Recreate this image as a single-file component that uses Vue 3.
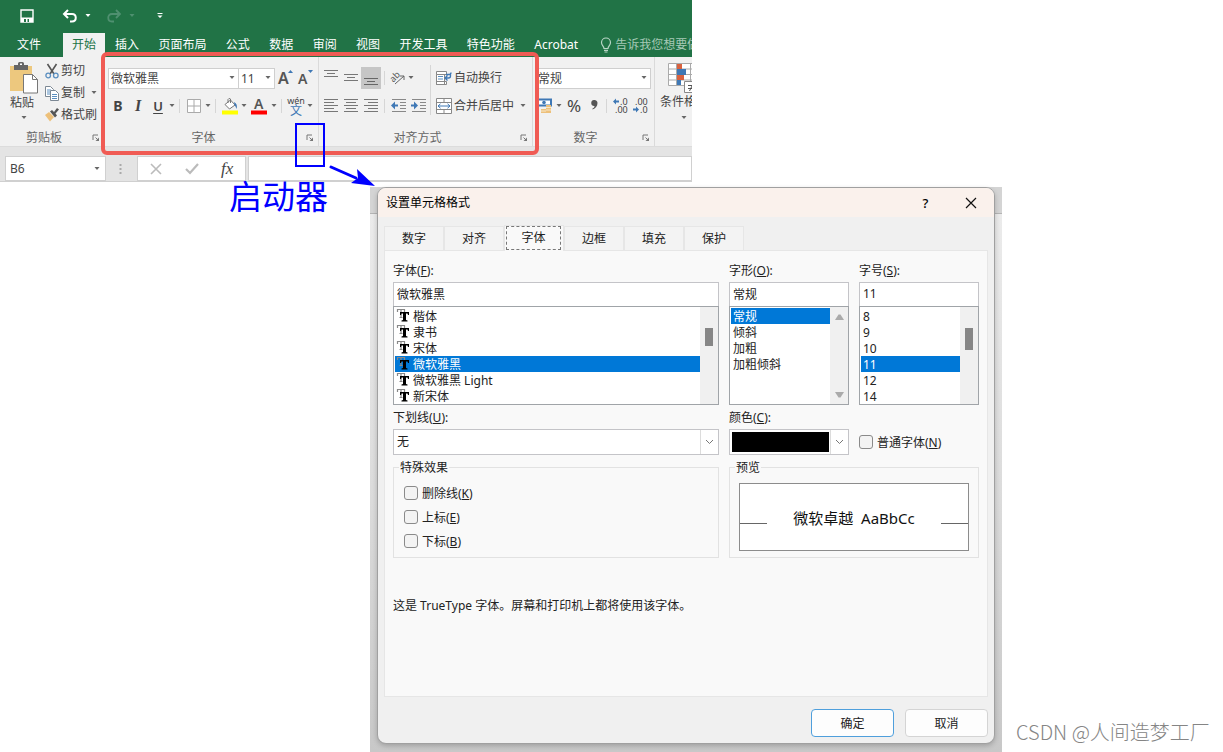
<script setup>
import { ref } from 'vue'

const ribbonTabs = ['插入', '页面布局', '公式', '数据', '审阅', '视图', '开发工具', '特色功能', 'Acrobat']
const dialogTabs = ['数字', '对齐', '字体', '边框', '填充', '保护']
const fonts = ['楷体', '隶书', '宋体', '微软雅黑', '微软雅黑 Light', '新宋体']
const styles = ['常规', '倾斜', '加粗', '加粗倾斜']
const sizes = ['8', '9', '10', '11', '12', '14']
const effects = [
  { text: '删除线', key: 'K' },
  { text: '上标', key: 'E' },
  { text: '下标', key: 'B' },
]

const activeTab = ref('字体')
const font = ref('微软雅黑')
const fontStyle = ref('常规')
const size = ref('11')
</script>

<template>
  <main class="page">
    <section class="excel">
      <header class="quick">
        <button class="q save" aria-label="保存">
          <svg width="14" height="14" viewBox="0 0 14 14"><path d="M1 1h12v12H1z" fill="none" stroke="#fff" stroke-width="1.4" /><path d="M1 8.5h12V13H1z" fill="#fff" /><path d="M4 10h2v3H4zM7.500 10h1.500v3H7.500z" fill="#217346" /></svg>
        </button>
        <button class="q undo" aria-label="撤消">
          <svg width="16" height="14" viewBox="0 0 16 14"><path d="M6 1L2 5l4 4M2.500 5H10c5 0 5 7.500 0 7.500H8" fill="none" stroke="#fff" stroke-width="2" /></svg>
        </button>
        <svg class="caret light" width="8" height="4" viewBox="0 0 8 4"><path d="M1.500 0h5L4 3z" /></svg>
        <button class="q redo" aria-label="恢复" disabled>
          <svg width="16" height="14" viewBox="0 0 16 14"><path d="M10 1l4 4-4 4M13.500 5H6c-5 0-5 7.500 0 7.500h2" fill="none" stroke="#4f9070" stroke-width="1.8" /></svg>
        </button>
        <svg class="caret dim" width="8" height="4" viewBox="0 0 8 4"><path d="M1.500 0h5L4 3z" /></svg>
        <button class="q custom" aria-label="自定义快速访问工具栏">
          <svg width="8" height="8" viewBox="0 0 8 8"><path d="M1.500 1h5v1h-5zM1.500 3.500h5L4 6z" fill="#fff" /></svg>
        </button>
      </header>

      <nav class="tabs">
        <a class="file" href="#file">文件</a>
        <a class="home" href="#home">开始</a>
        <div class="rest">
          <a v-for="t in ribbonTabs" :key="t" href="#tab">{{ t }}</a>
        </div>
        <button class="tell">
          <svg width="12" height="16" viewBox="0 0 12 16"><path d="M4 11.500C4 9 1.500 8.500 1.500 5.500a4.500 4.500 0 0 1 9 0C10.500 8.500 8 9 8 11.500zM4 13.300h4M4.500 15h3" fill="none" stroke="#b9d5c6" stroke-width="1.200" /></svg>
          <span>告诉我您想要做什么</span>
        </button>
      </nav>

      <div class="ribbon">
        <section class="group clip">
          <div class="tools">
            <button class="paste">
              <svg width="30" height="32" viewBox="0 0 30 32"><path d="M1 4h22v25H1z" fill="#edc87e" /><path d="M5 3h4V1.500Q9 0 10.500 0h3Q15 0 15 1.500V3h4v5H5z" fill="#666" /><path d="M11 1.500h2V3h-2z" fill="#fff" /><path d="M14.500 12.500h9l5 5V31h-14z" fill="#fff" stroke="#777" /><path d="M23.500 12.500v5h5" fill="none" stroke="#777" /></svg>
              <span>粘贴</span>
              <svg class="caret" width="8" height="4" viewBox="0 0 8 4"><path d="M1.500 0h5L4 3z" /></svg>
            </button>
            <div class="cliplist">
              <button>
                <svg width="14" height="15" viewBox="0 0 14 15"><path d="M2.500 0L9 10M11.500 0L5 10" stroke="#555" stroke-width="1.600" /><circle cx="3.200" cy="11.500" r="2.300" fill="none" stroke="#5b8fc0" stroke-width="1.300" /><circle cx="10.800" cy="11.500" r="2.300" fill="none" stroke="#5b8fc0" stroke-width="1.300" /></svg>
                <span>剪切</span>
              </button>
              <button>
                <svg width="14" height="15" viewBox="0 0 14 15"><path d="M.5.5h5l3 3v7h-8z" fill="#fff" stroke="#7c8894" /><path d="M2 4h4M2 6h4M2 8h4" stroke="#5b8fc0" /><path d="M5.500 4.500h5l3 3v7h-8z" fill="#fff" stroke="#7c8894" /><path d="M7 8.500h5M7 10.500h5M7 12.500h5" stroke="#5b8fc0" /></svg>
                <span>复制</span>
                <svg class="caret" width="8" height="4" viewBox="0 0 8 4"><path d="M1.500 0h5L4 3z" /></svg>
              </button>
              <button>
                <svg width="14" height="14" viewBox="0 0 14 14"><path d="M0 7l4-3 5 5-4 4.500z" fill="#edc07a" /><path d="M5 3.500l2-1.500 2 2 3-4 2 1.500-3.500 4 1.500 2L10 9.500z" fill="#555" /></svg>
                <span>格式刷</span>
              </button>
            </div>
          </div>
          <footer><span>剪贴板</span><button class="launch" aria-label="剪贴板设置"><svg width="8" height="8" viewBox="0 0 8 8"><path d="M1 6V1h5M3.500 3.500L6.500 6.500" fill="none" stroke="#777" /><path d="M7 3.500V7H3.500z" fill="#777" /></svg></button></footer>
        </section>

        <section class="group fontg">
          <div class="stack">
            <div class="row r1">
              <div class="combo wide"><select aria-label="字体名称"><option>微软雅黑</option></select><svg class="caret" width="8" height="4" viewBox="0 0 8 4"><path d="M1.500 0h5L4 3z" /></svg></div>
              <div class="combo small"><select aria-label="字体大小"><option>11</option></select><svg class="caret" width="8" height="4" viewBox="0 0 8 4"><path d="M1.500 0h5L4 3z" /></svg></div>
              <button class="b" aria-label="增大字号"><svg width="16" height="18" viewBox="0 0 16 18"><text x="1" y="15" class="glyph big">A</text><path d="M11 4l2.500-3L16 4z" fill="#3f78b5" /></svg></button>
              <button class="b" aria-label="减小字号"><svg width="16" height="18" viewBox="0 0 16 18"><text x="1" y="15" class="glyph">A</text><path d="M11 1h5l-2.500 3z" fill="#3f78b5" /></svg></button>
            </div>
            <div class="row r2">
              <button class="b bold">B</button>
              <button class="b ital">I</button>
              <button class="b under">U</button>
              <svg class="caret" width="8" height="4" viewBox="0 0 8 4"><path d="M1.500 0h5L4 3z" /></svg>
              <i class="sep"></i>
              <button class="b" aria-label="边框"><svg width="14" height="14" viewBox="0 0 14 14"><path d="M.5.5h13v13H.5zM7 .5v13M.5 7h13" fill="#fff" stroke="#aaa" /></svg></button>
              <svg class="caret" width="8" height="4" viewBox="0 0 8 4"><path d="M1.500 0h5L4 3z" /></svg>
              <i class="sep"></i>
              <button class="b" aria-label="填充颜色"><svg width="17" height="18" viewBox="0 0 17 18"><path d="M3 7.500L8.500 3l4.500 5-5.500 4z" fill="#fff" stroke="#777" /><path d="M6 6V2.500Q7 .5 8.500 2v4" fill="none" stroke="#777" /><path d="M12 5q4 2 2.500 7-1-3-2-4z" fill="#3f78b5" /><path d="M0 13.500h16v4H0z" fill="#ff0" /></svg></button>
              <svg class="caret" width="8" height="4" viewBox="0 0 8 4"><path d="M1.500 0h5L4 3z" /></svg>
              <button class="b b22" aria-label="字体颜色"><svg width="17" height="18" viewBox="0 0 17 18"><text x="3" y="12" class="glyph">A</text><path d="M0 13.500h16v4H0z" fill="#f00" /></svg></button>
              <svg class="caret" width="8" height="4" viewBox="0 0 8 4"><path d="M1.500 0h5L4 3z" /></svg>
              <i class="sep"></i>
              <button class="b pinyin"><span>wén</span><span class="wen">文</span></button>
              <svg class="caret" width="8" height="4" viewBox="0 0 8 4"><path d="M1.500 0h5L4 3z" /></svg>
            </div>
          </div>
          <footer><span>字体</span><button class="launch" aria-label="字体设置"><svg width="8" height="8" viewBox="0 0 8 8"><path d="M1 6V1h5M3.500 3.500L6.500 6.500" fill="none" stroke="#777" /><path d="M7 3.500V7H3.500z" fill="#777" /></svg></button></footer>
        </section>

        <section class="group alig">
          <div class="tools">
            <div class="stack">
              <div class="row r1">
                <button class="b" aria-label="顶端对齐"><svg width="14" height="18" viewBox="0 0 14 18"><path d="M0 1.500h14M3 4.500h8M0 7.500h14" stroke="#777" /></svg></button>
                <button class="b" aria-label="垂直居中"><svg width="14" height="18" viewBox="0 0 14 18"><path d="M0 5.500h14M3 8.500h8M0 11.500h14" stroke="#777" /></svg></button>
                <button class="b pressed" aria-label="底端对齐"><svg width="14" height="18" viewBox="0 0 14 18"><path d="M0 9.500h14M3 12.500h8M0 15.500h14" stroke="#666" /></svg></button>
                <i class="sep"></i>
                <button class="b b18" aria-label="方向"><svg width="14" height="14" viewBox="0 0 14 14"><text x="-1" y="8" class="ab" transform="rotate(-45 5 6)">ab</text><path d="M4 13L13 5M13 9V5H9" fill="none" stroke="#666" /></svg></button>
                <svg class="caret" width="8" height="4" viewBox="0 0 8 4"><path d="M1.500 0h5L4 3z" /></svg>
              </div>
              <div class="row r2">
                <button class="b" aria-label="左对齐"><svg width="14" height="16" viewBox="0 0 14 16"><path d="M0 1.500h14M0 4.500h10M0 7.500h14M0 10.500h10M0 13.500h14" stroke="#777" /></svg></button>
                <button class="b" aria-label="居中"><svg width="14" height="16" viewBox="0 0 14 16"><path d="M0 1.500h14M2 4.500h10M0 7.500h14M2 10.500h10M0 13.500h14" stroke="#777" /></svg></button>
                <button class="b" aria-label="右对齐"><svg width="14" height="16" viewBox="0 0 14 16"><path d="M0 1.500h14M4 4.500h10M0 7.500h14M4 10.500h10M0 13.500h14" stroke="#777" /></svg></button>
                <i class="sep"></i>
                <button class="b" aria-label="减少缩进量"><svg width="16" height="16" viewBox="0 0 16 16"><path d="M1 1.500h14M9 4.500h6M9 7.500h6M9 10.500h6M1 13.500h14" stroke="#888" /><path d="M0 7.500L4 3.500v3h3v2H4v3z" fill="#3f78b5" /></svg></button>
                <button class="b" aria-label="增加缩进量"><svg width="16" height="16" viewBox="0 0 16 16"><path d="M1 1.500h14M9 4.500h6M9 7.500h6M9 10.500h6M1 13.500h14" stroke="#888" /><path d="M7 7.500l-4-4v3H0v2h3v3z" fill="#3f78b5" /></svg></button>
              </div>
            </div>
            <i class="sep tall"></i>
            <div class="stack">
              <div class="row r1">
                <button class="txt"><svg width="16" height="16" viewBox="0 0 16 16"><path d="M.5 1.500h10v3H.5zM.5 4.500h8v10h-8zM.5 11.500h10v3H.5z" fill="#fff" stroke="#888" /><path d="M2 6.500h5M2 9h5" stroke="#5b8fc0" /><path d="M10 4.500h3q2 0 2-2M14.500 3v3q0 2-2 2H9M11.500 5.500L9 8l2.500 2.500" fill="none" stroke="#3f78b5" stroke-width="1.300" /></svg><span>自动换行</span></button>
              </div>
              <div class="row r2">
                <button class="txt"><svg width="16" height="16" viewBox="0 0 16 16"><path d="M.5.5h15v15H.5zM.5 4.500h15M.5 11.500h15M8 .5v4M8 11.500v4" fill="#fff" stroke="#888" /><path d="M2 8h12M4.500 5.800L2 8l2.500 2.200M11.500 5.800L14 8l-2.500 2.200" fill="none" stroke="#3f78b5" /></svg><span>合并后居中</span></button>
                <svg class="caret gap" width="8" height="4" viewBox="0 0 8 4"><path d="M1.500 0h5L4 3z" /></svg>
              </div>
            </div>
          </div>
          <footer><span>对齐方式</span><button class="launch" aria-label="对齐设置"><svg width="8" height="8" viewBox="0 0 8 8"><path d="M1 6V1h5M3.500 3.500L6.500 6.500" fill="none" stroke="#777" /><path d="M7 3.500V7H3.500z" fill="#777" /></svg></button></footer>
        </section>

        <section class="group numb">
          <div class="stack">
            <div class="row r1">
              <div class="combo fmt"><select aria-label="数字格式"><option>常规</option></select><svg class="caret" width="8" height="4" viewBox="0 0 8 4"><path d="M1.500 0h5L4 3z" /></svg></div>
            </div>
            <div class="row r2">
              <button class="b" aria-label="会计数字格式"><svg width="16" height="16" viewBox="0 0 16 16"><path d="M1 1.500h13v6H1z" fill="#fff" stroke="#3f78b5" stroke-width="2" /><circle cx="7" cy="4.500" r="1.800" fill="#3f78b5" /><path d="M9 7h5v8H9zM4 11h5v4H4z" fill="#edc07a" /><path d="M9 9.500h5M9 12h5M4 13h5" stroke="#f7e8cc" /></svg></button>
              <svg class="caret" width="8" height="4" viewBox="0 0 8 4"><path d="M1.500 0h5L4 3z" /></svg>
              <button class="b b22 pct">%</button>
              <button class="b b18" aria-label="千位分隔样式"><svg width="10" height="14" viewBox="0 0 10 14"><path d="M5 1a3 3 0 0 1 3.500 3c0 3-2 5.500-5 6.500V9.500C5 9 5.500 8 5.500 7A3 3 0 0 1 5 1z" fill="#555" /></svg></button>
              <i class="sep"></i>
              <button class="b" aria-label="增加小数位数"><svg width="18" height="18" viewBox="0 0 18 18"><path d="M1 4.500L4 1.500v2h3v2H4v2z" fill="#3f78b5" /><text x="8" y="8" class="dec">.0</text><text x="3" y="16" class="dec">.00</text></svg></button>
              <button class="b" aria-label="减少小数位数"><svg width="18" height="18" viewBox="0 0 18 18"><path d="M7 12.500l-3-3v2H1v2h3v2z" fill="#3f78b5" /><text x="3" y="8" class="dec">.00</text><text x="8" y="16" class="dec">.0</text></svg></button>
            </div>
          </div>
          <footer><span>数字</span><button class="launch" aria-label="数字设置"><svg width="8" height="8" viewBox="0 0 8 8"><path d="M1 6V1h5M3.500 3.500L6.500 6.500" fill="none" stroke="#777" /><path d="M7 3.500V7H3.500z" fill="#777" /></svg></button></footer>
        </section>

        <section class="group cond">
          <button class="condbtn">
            <svg width="32" height="30" viewBox="0 0 32 30"><path d="M.5.5h30v22H.5zM.5 6h30M.5 11.500h30M.5 17h30M8.500.5v22M22.500.5v22" fill="#fff" stroke="#aaa" /><path d="M9 1h5v5H9zM9 12h7v5H9z" fill="#d9623f" /><path d="M9 6h9v6H9zM9 17h4v5H9z" fill="#3f78b5" /><path d="M16.500 18.500h14v11h-14z" fill="#fff" stroke="#888" /><path d="M20 22.500h7M20 25.500h7M25.500 20l-4 8" stroke="#555" /></svg>
            <span>条件格式</span>
            <svg class="caret" width="8" height="4" viewBox="0 0 8 4"><path d="M1.500 0h5L4 3z" /></svg>
          </button>
        </section>
      </div>

      <div class="formula">
        <div class="namebox"><input aria-label="名称框" value="B6" /><svg class="caret" width="8" height="4" viewBox="0 0 8 4"><path d="M1.500 0h5L4 3z" /></svg></div>
        <svg class="dots" width="3" height="12" viewBox="0 0 3 12"><path d="M.5 1h2v2h-2zM.5 5h2v2h-2zM.5 9h2v2h-2z" fill="#aaa" /></svg>
        <div class="fxbox">
          <button aria-label="取消输入"><svg width="12" height="12" viewBox="0 0 12 12"><path d="M1 1l10 10M11 1L1 11" stroke="#bbb" stroke-width="1.600" /></svg></button>
          <button aria-label="输入"><svg width="14" height="12" viewBox="0 0 14 12"><path d="M1 6l4 4 8-9" fill="none" stroke="#bbb" stroke-width="2.200" /></svg></button>
          <button class="fx">fx</button>
        </div>
        <input class="cell" aria-label="编辑栏" />
      </div>

      <div class="redbox"></div>
      <div class="bluebox"></div>
      <svg class="arrow" width="48" height="28" viewBox="0 0 48 28"><path d="M2 4L27 15" stroke="#00f" stroke-width="3" stroke-linecap="round" /><path d="M46 23L22 20l7-5-1-9z" fill="#00f" /></svg>
    </section>

    <div class="lower">
      <p class="callout">启动器</p>

      <div class="backdrop">
        <section class="dialog" role="dialog" aria-label="设置单元格格式">
          <header class="title">
            <h1>设置单元格格式</h1>
            <button class="help">?</button>
            <button aria-label="关闭"><svg width="12" height="12" viewBox="0 0 12 12"><path d="M1 1l10 10M11 1L1 11" stroke="#111" stroke-width="1.200" /></svg></button>
          </header>

          <div class="dbody">
            <div class="dtabs" role="tablist">
              <button v-for="t in dialogTabs" :key="t" role="tab" :aria-selected="t === activeTab" :class="{ on: t === activeTab }" @click="activeTab = t"><span>{{ t }}</span></button>
            </div>

            <div class="panel">
              <div class="cols">
                <div class="field">
                  <label for="font">字体(<u>F</u>):</label>
                  <input id="font" v-model="font" />
                  <div class="listwrap">
                    <ul role="listbox" aria-label="字体">
                      <li v-for="f in fonts" :key="f" role="option" :aria-selected="f === font" :class="{ sel: f === font }" @click="font = f">
                        <svg width="12" height="14" viewBox="0 0 12 14"><path d="M.5 3V.5h7V3M4 .5v8M2.500 8.500h3" fill="none" stroke="#888" stroke-width="1.200" /><path d="M3 3h9v3h-1L10.500 4.500H9V11l1.500.5v1h-6v-1L6 11V4.500H4.500L4 6H3z" fill="#000" /></svg>
                        <span>{{ f }}</span>
                      </li>
                    </ul>
                    <div class="bar"><i class="thumb"></i></div>
                  </div>
                </div>
                <div class="field">
                  <label for="style">字形(<u>O</u>):</label>
                  <input id="style" v-model="fontStyle" />
                  <div class="listwrap">
                    <ul role="listbox" aria-label="字形">
                      <li v-for="s in styles" :key="s" role="option" :aria-selected="s === fontStyle" :class="{ sel: s === fontStyle }" @click="fontStyle = s"><span>{{ s }}</span></li>
                    </ul>
                    <div class="bar ends">
                      <svg width="9" height="6" viewBox="0 0 9 6"><path d="M0 6L3.500.5h2L9 6z" fill="#aaa" /></svg>
                      <svg width="9" height="6" viewBox="0 0 9 6"><path d="M0 0h9L5.500 5.500h-2z" fill="#aaa" /></svg>
                    </div>
                  </div>
                </div>
                <div class="field">
                  <label for="size">字号(<u>S</u>):</label>
                  <input id="size" v-model="size" />
                  <div class="listwrap">
                    <ul role="listbox" aria-label="字号">
                      <li v-for="s in sizes" :key="s" role="option" :aria-selected="s === size" :class="{ sel: s === size }" @click="size = s"><span>{{ s }}</span></li>
                    </ul>
                    <div class="bar"><i class="thumb long"></i></div>
                  </div>
                </div>

                <div class="field">
                  <label for="uline">下划线(<u>U</u>):</label>
                  <div class="drop"><select id="uline"><option>无</option></select><span class="chev"><svg width="9" height="6" viewBox="0 0 9 6"><path d="M1 1l3.500 3.500L8 1" fill="none" stroke="#777" /></svg></span></div>
                </div>
                <div class="field">
                  <label for="color">颜色(<u>C</u>):</label>
                  <div class="drop color"><select id="color"><option></option></select><span class="chev"><svg width="9" height="6" viewBox="0 0 9 6"><path d="M1 1l3.500 3.500L8 1" fill="none" stroke="#777" /></svg></span></div>
                </div>
                <label class="check normal"><input type="checkbox" /><span>普通字体(<u>N</u>)</span></label>

                <fieldset class="effects">
                  <legend>特殊效果</legend>
                  <label v-for="e in effects" :key="e.key" class="check"><input type="checkbox" /><span>{{ e.text }}(<u>{{ e.key }}</u>)</span></label>
                </fieldset>
                <fieldset class="preview">
                  <legend>预览</legend>
                  <div class="sample"><i></i><span>微软卓越&nbsp; AaBbCc</span><i></i></div>
                </fieldset>
              </div>
              <p class="note">这是 TrueType 字体。屏幕和打印机上都将使用该字体。</p>
            </div>

            <footer class="actions">
              <button class="primary">确定</button>
              <button>取消</button>
            </footer>
          </div>
        </section>
      </div>

      <p class="mark">CSDN @人间造梦工厂</p>
    </div>
  </main>
</template>

<style>
html, body { margin: 0; background: #fff; }
</style>

<style scoped>
* { box-sizing: border-box; }
.page {
  display: flex;
  flex-direction: column;
  min-height: 100vh;
  font-family: "Noto Sans", "Noto Sans CJK SC", sans-serif;
  font-size: 12px;
  line-height: 16px;
  color: #222;
}
button, input, select { font: inherit; color: inherit; margin: 0; padding: 0; border: 0; background: none; border-radius: 0; outline: 0; }
select { appearance: none; width: 100%; height: 100%; }
button { display: flex; align-items: center; justify-content: center; white-space: nowrap; }
svg { display: block; flex: none; overflow: visible; }
p, h1, ul { margin: 0; padding: 0; font-weight: 400; font-size: inherit; list-style: none; }

.excel { position: relative; width: 56.6%; overflow-x: clip; background: #e4e4e4; color: #444; }
.caret { fill: #666; }
.caret.light { fill: #fff; }
.caret.dim { fill: #4f9070; }

.quick { display: flex; align-items: center; height: 33px; padding: 0 0 2px 20px; background: #217346; }
.undo { margin-left: 28px; }
.quick .light { margin-left: 6px; }
.redo { margin-left: 14px; }
.quick .dim { margin-left: 6px; }
.custom { margin-left: 20px; }

.tabs { display: flex; height: 24px; background: #217346; color: #fff; line-height: 24px; }
.tabs a { color: inherit; text-decoration: none; white-space: nowrap; }
.tabs .file { width: 63px; padding-left: 17px; }
.tabs .home { width: 42px; text-align: center; background: #f1f1f1; color: #217346; }
.rest { display: flex; flex: 1; justify-content: space-between; padding: 0 22px 0 10px; }
.tell { justify-content: flex-start; gap: 3px; width: 92px; height: 24px; overflow: hidden; color: #a6c9b6; }

.ribbon { display: flex; height: 90px; background: #f1f1f1; border-bottom: 1px solid #dcdcdc; overflow: hidden; }
.group { display: flex; flex: none; flex-direction: column; justify-content: space-between; border-right: 1px solid #dadada; }
.group footer { display: flex; align-items: center; height: 17px; color: #666; }
.group footer span { flex: 1; text-align: center; }
.launch { width: 16px; height: 16px; }
.tools { display: flex; }
.clip { width: 105px; }
.clip .tools { padding: 5px 0 0 10px; }
.paste { flex-direction: column; width: 28px; height: 58px; justify-content: flex-start; gap: 1px; }
.paste span { margin-right: 4px; }
.paste .caret { margin-top: 4px; }
.cliplist { padding: 0 0 0 7px; }
.cliplist button { height: 22px; gap: 2px; min-width: 52px; justify-content: flex-start; margin-top: -2px; margin-bottom: 2px; }
.cliplist .caret { margin-left: 3px; }
.stack { display: flex; flex-direction: column; gap: 7px; padding-top: 10px; }
.row { display: flex; align-items: center; }
.r1 { height: 22px; }
.r2 { height: 20px; }
.fontg { width: 214px; }
.fontg .stack { padding-left: 3px; }
.alig { width: 214px; }
.alig .tools { padding-left: 2px; }
.numb { width: 122px; }
.numb .stack { padding-left: 2px; }
.cond { width: 80px; border: 0; justify-content: flex-start; padding: 6px 0 0 3px; }
.condbtn { flex-direction: column; width: 52px; }
.condbtn span { margin: 1px 0 6px; }
.combo { display: flex; align-items: center; height: 21px; padding: 0 2px; background: #fff; border: 1px solid #cfcfcf; }
.combo select { padding-top: 2px; }
.wide { width: 131px; }
.small { width: 37px; margin-left: -1px; }
.fmt { width: 116px; }
.b { width: 20px; height: 20px; flex: none; }
.b18 { width: 18px; }
.b22 { width: 22px; }
.pressed { height: 22px; background: #c6c6c6; }
.bold { font-size: 14px; font-weight: 700; }
.ital { font-family: "Liberation Serif", serif; font-size: 16px; font-style: italic; font-weight: 700; }
.under { font-size: 13px; font-weight: 600; text-decoration: underline; text-underline-offset: 2px; }
.pct { font-size: 17px; }
.sep { width: 1px; height: 14px; margin: 0 4px 0 3px; background: #d6d6d6; }
.tall { height: 50px; margin: 8px 5px 0 1px; }
.glyph { font-size: 14px; font-weight: 600; fill: #555; }
.big { font-size: 16px; }
.ab { font-size: 9px; fill: #555; }
.dec { font-size: 9px; fill: #444; }
.pinyin { flex-direction: column; font-size: 9px; line-height: 9px; }
.wen { font-size: 12px; line-height: 11px; color: #3f78b5; }
.txt { gap: 2px; }
.gap { margin-left: 5px; }

.formula { display: flex; align-items: center; height: 35px; padding: 9px 0 0 5px; border-bottom: 1px solid #d0d0d0; }
.formula > div, .cell { height: 25px; background: #fff; border: 1px solid #d0d0d0; }
.namebox { display: flex; align-items: center; width: 101px; padding: 0 4px; }
.namebox input { width: 100%; min-width: 0; }
.dots { margin: 0 15px 0 13px; }
.fxbox { display: flex; align-items: center; width: 109px; }
.fxbox button { width: 36px; height: 22px; }
.formula .fx { font-family: "Liberation Serif", serif; font-size: 17px; font-style: italic; }
.cell { flex: 1; margin-left: 2px; min-width: 0; padding: 0 4px; }

.redbox { position: absolute; left: 101px; top: 52px; width: 438px; height: 103px; border: 4px solid #f05b54; border-radius: 6px; pointer-events: none; }
.bluebox { position: absolute; left: 295px; top: 123px; width: 30px; height: 44px; border: 2px solid #00f; pointer-events: none; }
.arrow { position: absolute; left: 329px; top: 163px; z-index: 2; pointer-events: none; }

.lower { display: grid; flex: 1; grid-template-columns: 370px 1fr 221px; }
.callout { position: relative; padding-right: 42px; text-align: right; font-family: "Liberation Serif", "Noto Sans CJK SC", serif; font-size: 33px; line-height: 32px; color: #00f; }
.backdrop { display: flex; margin-top: 5px; padding: 0 7px 8px; background: linear-gradient(#d4d4d4 26px, #b4b4b4 26px, #b4b4b4 27px, #ebebeb 27px, #dcdcdc 300px, #c8c8c8); }
.dialog { display: flex; flex: 1; flex-direction: column; overflow: hidden; border: 1px solid #a0a0a0; border-radius: 9px; background: #f0f0f0; box-shadow: 0 2px 5px rgba(0, 0, 0, .2); }
.title { display: flex; align-items: center; height: 29px; padding: 0 1px 0 8px; background: #faf1ec; color: #000; }
.title h1 { flex: 1; }
.title button { width: 45px; height: 29px; }
.help { font-size: 13px; font-weight: 500; }
.dbody { display: flex; flex: 1; flex-direction: column; padding: 9px 6px 6px; }
.dtabs { display: flex; height: 24px; }
.dtabs button { width: 60px; height: 24px; padding-top: 1px; background: #f3f3f3; border: 1px solid #e6e6e6; border-bottom: 0; }
.dtabs .on { position: relative; height: 26px; margin: -1px 0; padding: 1px 2px 2px 1px; background: #f9f9f9; }
.dtabs .on span { width: 100%; border: 1px dashed #777; line-height: 22px; }
.panel { flex: 1; padding: 11px 8px; background: #f9f9f9; border: 1px solid #e6e6e6; }
.cols { display: grid; grid-template-columns: 326fr 120fr 120fr; column-gap: 10px; row-gap: 4px; }
.field { display: flex; flex-direction: column; min-width: 0; }
.field > label { height: 16px; margin-bottom: 4px; line-height: 18px; }
.field > input { width: 100%; height: 24px; padding: 0 3px 2px; background: #fff; border: 1px solid #c4c4c8; border-bottom: 0; }
.listwrap { display: flex; height: 99px; padding: 1px 0 0 1px; background: #fff; border: 1px solid #a0a4a8; }
.listwrap ul { flex: 1; }
.listwrap li { display: flex; align-items: center; height: 16px; padding-left: 2px; gap: 4px; }
.listwrap li span { padding-top: 2px; }
.listwrap .sel { background: #0078d7; color: #fff; }
.bar { display: flex; flex-direction: column; align-items: center; width: 18px; margin-top: -1px; padding-top: 21px; background: #f0f0f0; }
.ends { justify-content: space-between; padding: 7px 0 6px; }
.thumb { width: 8px; height: 18px; background: #868686; }
.long { height: 22px; }
.drop { display: flex; height: 26px; padding-left: 3px; background: #fff; border: 1px solid #c4c4c8; }
.chev { display: flex; align-items: center; justify-content: center; flex: none; width: 18px; border-left: 1px solid #dcdcdc; }
.color { padding-left: 2px; }
.color select { height: 20px; margin: 2px 1px 2px 0; background: #000; }
.check { display: flex; align-items: center; gap: 4px; height: 24px; }
.check span { padding-top: 2px; }
.check input { appearance: none; width: 14px; height: 14px; background: #f3f3f3; border: 1px solid #8a8a8a; border-radius: 3px; }
.normal { align-self: end; height: 26px; }
fieldset { min-width: 0; margin: 0; border: 1px solid #e2e2e2; }
legend { padding: 0 1px; height: 16px; line-height: 18px; }
.effects { padding: 6px 10px 4px; }
.effects legend { margin-left: -5px; }
.preview { grid-column: span 2; padding: 8px 9px 6px; }
.preview legend { margin-left: -4px; }
.sample { display: flex; align-items: center; justify-content: space-between; height: 68px; padding-top: 2px; background: #fff; border: 1px solid #8c8c8c; font-size: 15px; color: #111; }
.sample i { width: 27px; height: 1px; margin-top: 10px; background: #666; }
.note { margin-top: 40px; }
.actions { display: flex; justify-content: flex-end; gap: 11px; padding-top: 12px; }
.actions button { width: 83px; height: 28px; padding-top: 1px; background: #fdfdfd; border: 1px solid #d4d4d4; border-radius: 4px; }
.actions .primary { border-color: #4f9fdc; }
.mark { align-self: end; padding: 0 0 6px 14px; font-family: "Noto Sans CJK SC", sans-serif; font-weight: 300; font-size: 20px; line-height: 28px; color: #858585; white-space: nowrap; }
</style>
